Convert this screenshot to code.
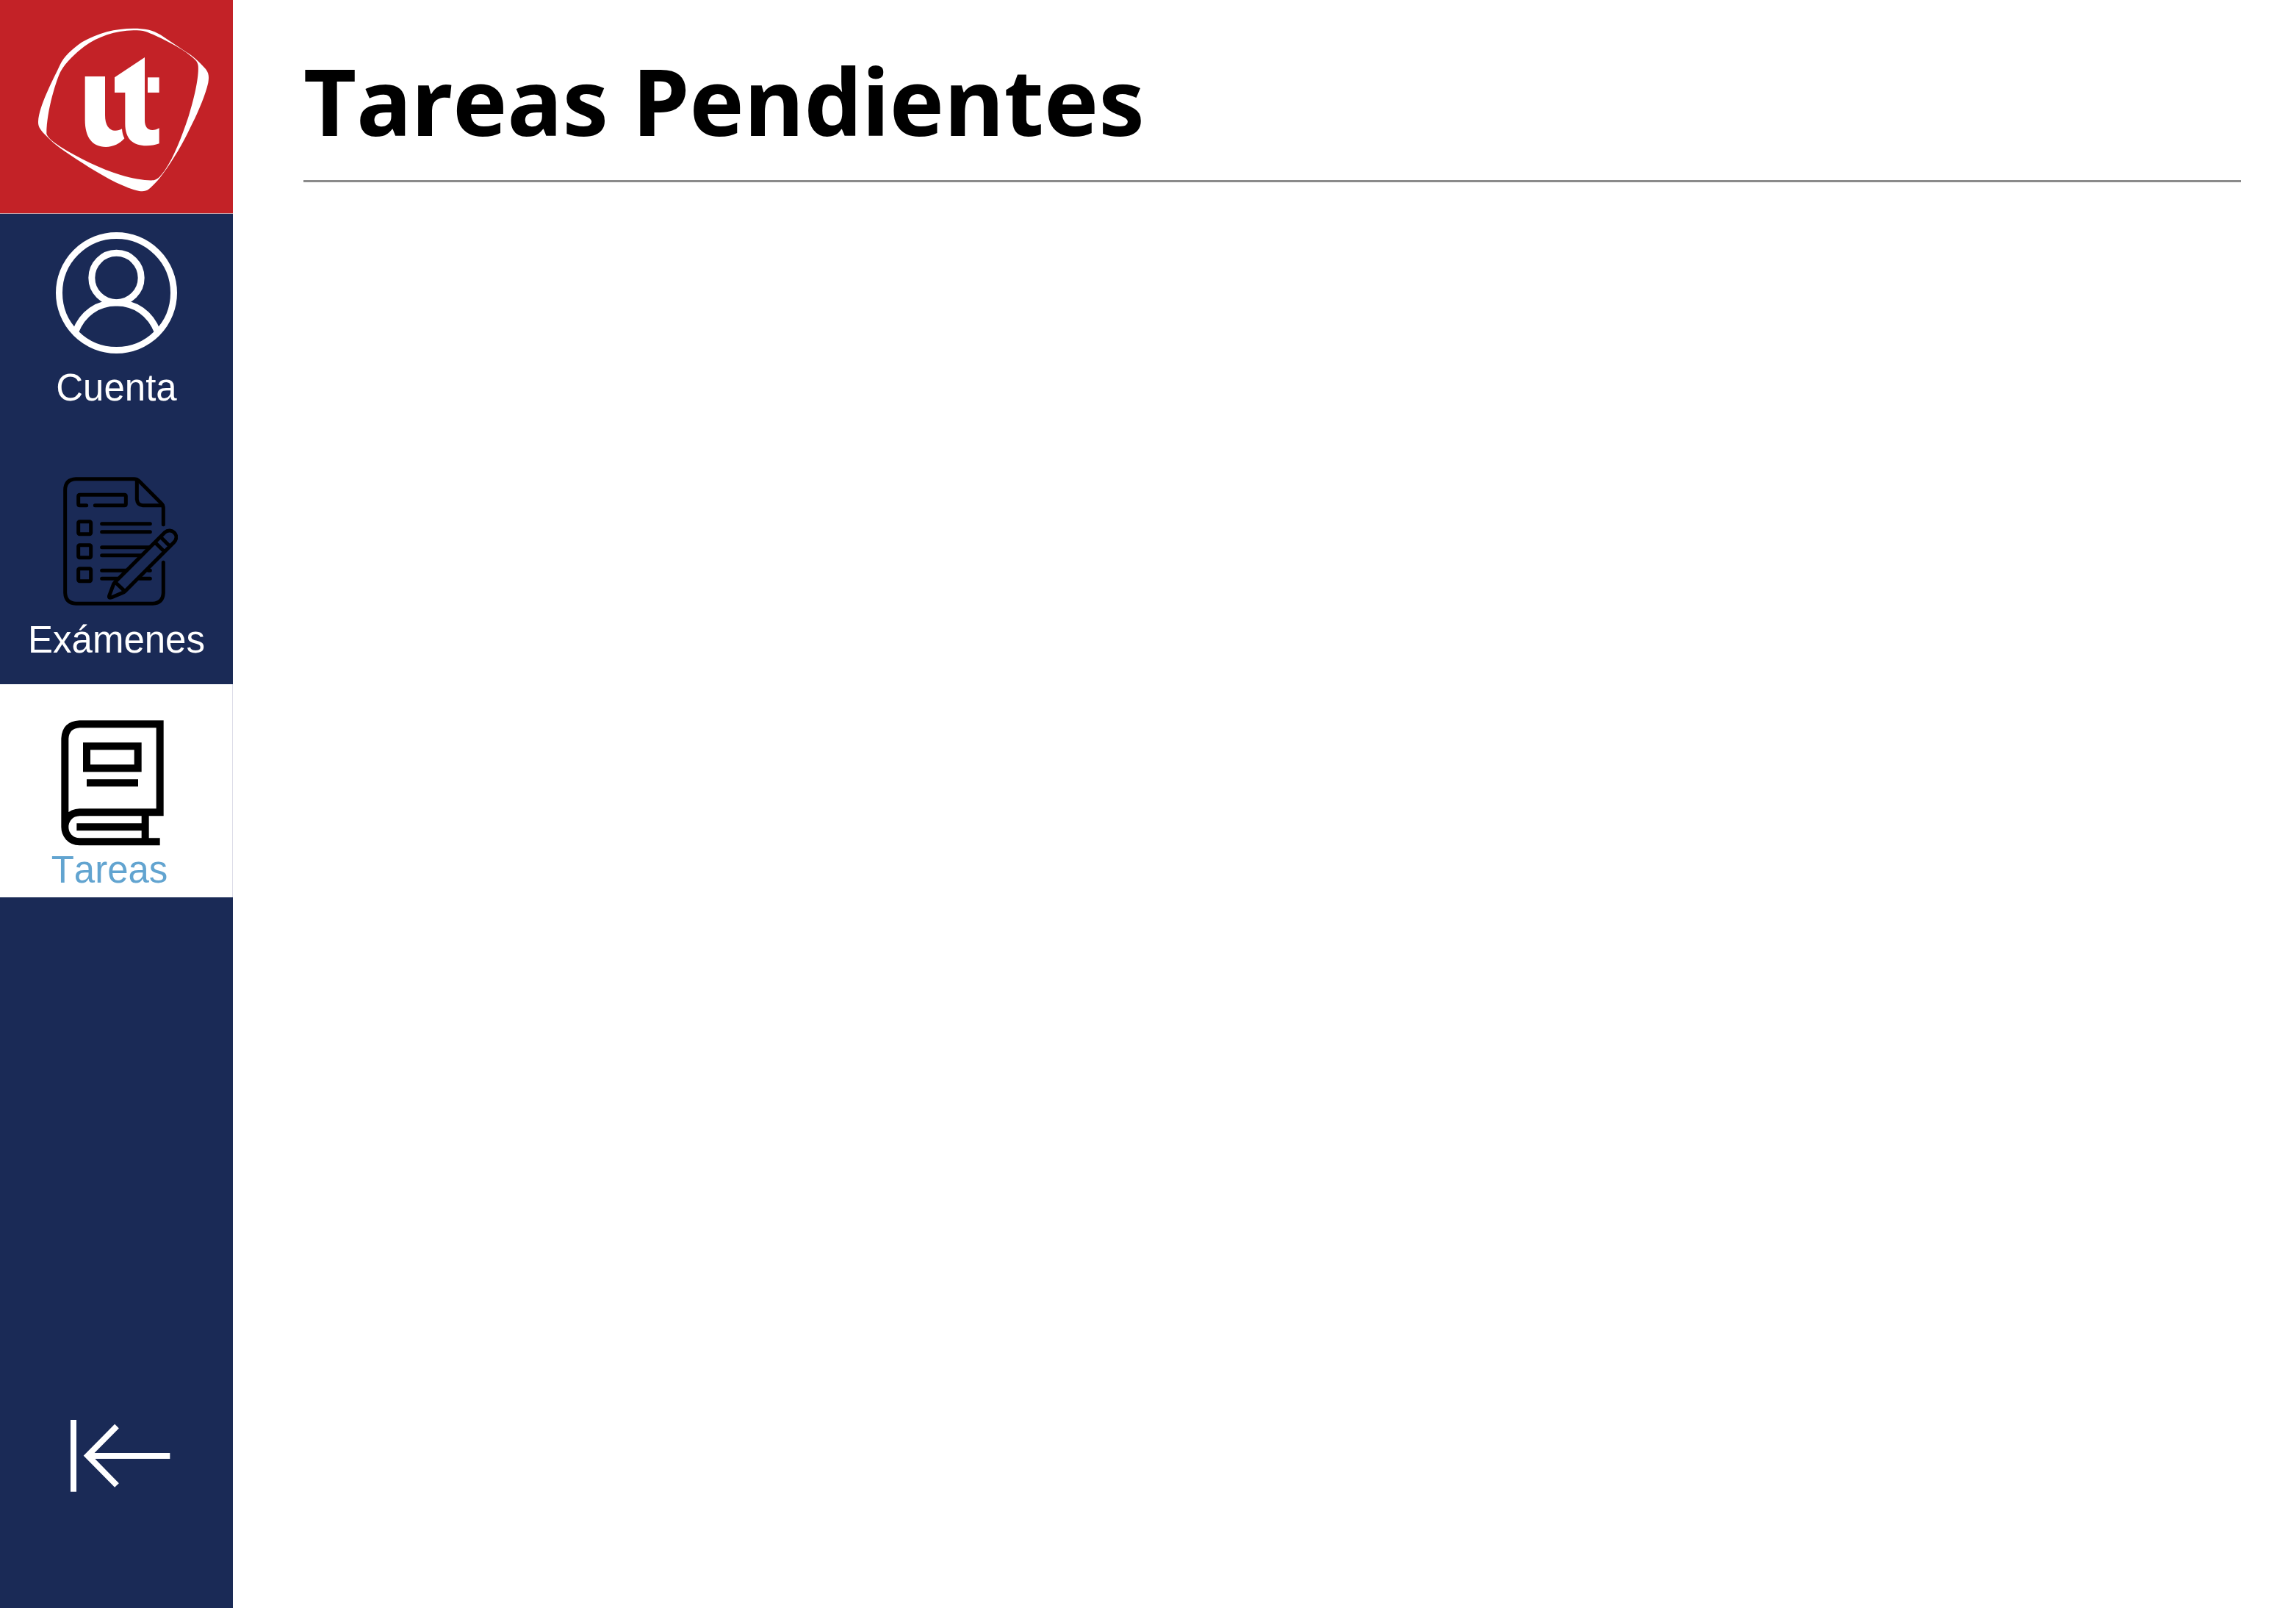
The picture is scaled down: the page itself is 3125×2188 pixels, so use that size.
<script>
  const current = 'tareas';
</script>

<div class="page">
  <aside class="sidebar">
    <a class="logo" href="#inicio" aria-label="Inicio">
      <svg viewBox="0 0 951 870" aria-hidden="true">
        <path
          fill="#fff"
          fill-rule="evenodd"
          d="M545 116C590 116 625 122 655 142L760 212C785 228 812 250 840 282C855 301 853 318 850 338C840 384 812 450 785 505C745 590 700 665 652 727C640 743 623 759 608 772C592 784 575 782 556 777C480 757 385 697 315 652C270 622 225 594 190 556C165 531 155 518 156 496C160 430 215 330 245 265C260 232 295 200 335 172C400 134 470 116 545 116Z
          M545 124C470 125 400 150 345 189C310 215 268 255 248 291C232 321 190 450 190 546C194 562 218 580 247 599C320 645 415 690 492 714C545 730 595 738 628 736C646 732 657 716 672 697C712 640 745 550 770 475C795 395 813 310 809 268C807 250 795 240 760 214C725 188 640 145 595 129C580 124 565 124 545 124Z"
        />
        <path
          fill="#fff"
          d="M347 312H429V470C429 510 445 533 470 533C482 533 490 530 498 526C499 541 502 553 508 565C490 586 463 600 432 600C378 600 347 562 347 490Z"
        />
        <path
          fill="#fff"
          d="M591 234V490C591 517 602 531 622 531C633 531 642 528 650 523V586C634 592 617 595 598 595C543 595 511 568 511 505V378H468V316Z"
        />
        <path fill="#fff" d="M603 316H650V378H603Z" />
      </svg>
    </a>

    <nav class="menu" aria-label="Principal">
      <a class="item cuenta" href="#cuenta" aria-current={current === 'cuenta' ? 'page' : undefined}>
        <svg viewBox="227 78 495 495" fill="none" stroke="#fff" stroke-width="27" aria-hidden="true">
          <circle cx="474.500" cy="325.500" r="234" />
          <circle cx="474.500" cy="264" r="101" />
          <path d="M308 482C336 411 396 366 474.500 366S613 411 641 482" />
        </svg>
        <span>Cuenta</span>
      </a>

      <a class="item examenes" href="#examenes" aria-current={current === 'examenes' ? 'page' : undefined}>
        <svg
          viewBox="225 57 501 525"
          fill="none"
          stroke="#000"
          stroke-width="15"
          stroke-linecap="round"
          stroke-linejoin="round"
          aria-hidden="true"
        >
          <path d="M667 251V184Q667 173 659 165L567 73Q559 65 548 65H310Q266 67 266 110V530Q268 572 310 574H624Q665 572 667 530V406" />
          <path d="M559 68V148Q561 172 583 173H664" />
          <path d="M353 173H326Q320 173 320 167V136Q320 130 326 130H508Q514 130 514 136V167Q514 173 508 173H388" />
          <rect x="320" y="239" width="51" height="51" rx="5" />
          <rect x="320" y="335" width="51" height="51" rx="5" />
          <rect x="320" y="431" width="51" height="51" rx="5" />
          <path d="M416 248H613M416 281H613M416 344H610M416 377H576M416 439H514M416 472H480M606 439H613M570 472H613" />
          <path d="M470 486L672 284C700 260 737 296 710 324L510 524Q506 528 500 530L455 549Q443 553 446 542L464 494Q466 490 470 486ZM470 486L510 524M633 324L670 361M656 302L692 338" />
        </svg>
        <span>Exámenes</span>
      </a>

      <a class="item tareas" href="#tareas" aria-current={current === 'tareas' ? 'page' : undefined}>
        <svg viewBox="228 181 441 513" fill="none" stroke="#000" stroke-width="30" aria-hidden="true">
          <path d="M265 617V256Q268 200 325 197H653V557H325C245 560 245 674 325 677H653" />
          <path d="M593 557V677M313 617H593M354 437H564" />
          <rect x="354" y="287" width="209" height="90" />
        </svg>
        <span>Tareas</span>
      </a>
    </nav>

    <button class="collapse" type="button" aria-label="Contraer menú">
      <svg viewBox="255 156 441 294" fill="none" stroke="#fff" stroke-width="24" aria-hidden="true">
        <path d="M300 156V449M694 303H365M477 182L358 302L477 423" />
      </svg>
    </button>
  </aside>

  <main>
    <h1>Tareas Pendientes</h1>
  </main>
</div>

<style>
  :global(body) {
    margin: 0;
    background: #fff;
  }

  .page {
    display: flex;
    min-height: 100vh;
  }

  .sidebar {
    box-sizing: border-box;
    display: flex;
    flex: none;
    flex-direction: column;
    width: 317px;
    background: #1a2a56;
    font-family: 'Liberation Sans', Arial, sans-serif;
  }

  .logo {
    display: block;
    border-bottom: 1px solid #c49fa6;
    background: #c32227;
  }

  svg {
    display: block;
  }

  .logo svg {
    width: 317px;
    height: 290px;
  }

  .item {
    box-sizing: border-box;
    display: flex;
    flex-direction: column;
    align-items: center;
    gap: 16px;
    height: 320px;
    color: #fff;
    font-size: 51px;
    font-kerning: none;
    line-height: 62px;
    text-decoration: none;
  }

  .cuenta {
    padding-top: 25px;
  }

  .cuenta svg {
    width: 165px;
    height: 165px;
  }

  .examenes {
    padding-top: 38px;
  }

  .examenes svg {
    width: 167px;
    height: 175px;
  }

  .tareas {
    gap: 2px;
    height: 290px;
    padding-top: 49px;
    padding-right: 18px;
    border-right: 1px solid #dcdce8;
  }

  .tareas svg {
    width: 147px;
    height: 171px;
  }

  .item[aria-current='page'] {
    background: #fff;
    color: #62a4d0;
  }

  .collapse {
    display: flex;
    justify-content: center;
    margin-top: auto;
    padding: 40px 0 158px;
    border: 0;
    background: none;
    cursor: pointer;
  }

  .collapse svg {
    width: 147px;
    height: 98px;
  }

  main {
    flex: 1;
    min-width: 0;
    padding: 62px 75px 0 96px;
  }

  h1 {
    margin: 0;
    padding-bottom: 33px;
    border-bottom: 3px solid #8a8a8a;
    color: #000;
    font-family: 'Noto Sans', 'Open Sans', sans-serif;
    font-size: 125px;
    font-weight: 700;
    font-kerning: none;
    line-height: 150px;
  }
</style>
